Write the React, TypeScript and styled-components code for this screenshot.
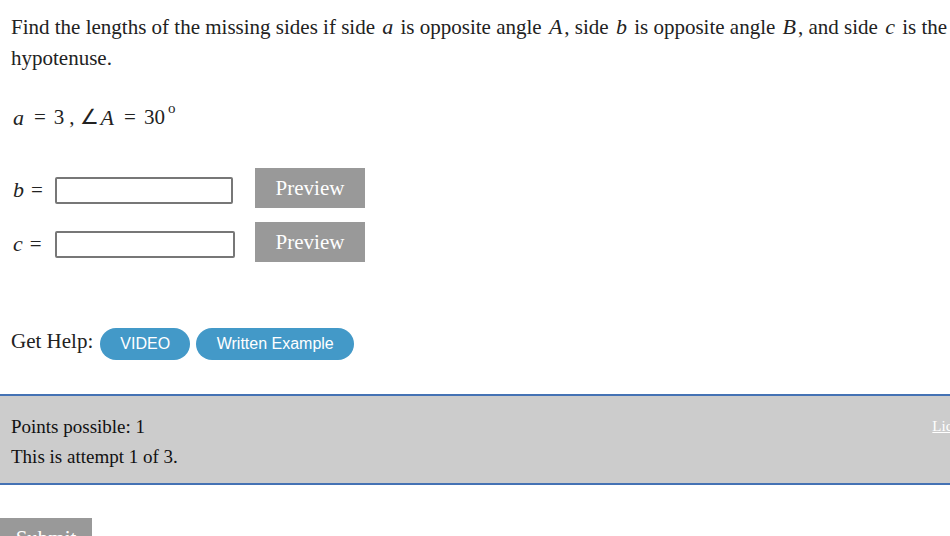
import React from "react";
import styled, { createGlobalStyle } from "styled-components";

const Global = createGlobalStyle`
  html, body { margin: 0; padding: 0; overflow: hidden; background: #fff; }
  body { font-family: "Liberation Serif", "Times New Roman", serif; color: #222; }
`;

const Page = styled.div`
  width: 1000px;
`;

const Question = styled.div`
  padding: 0 11px;
  font-size: 21px;
  line-height: 31px;
`;

const Para = styled.p`
  margin: 11px 0 0;
  width: 950px;
`;

const V = styled.i`
  font-family: "Liberation Serif", serif;
  font-style: italic;
  font-size: 22px;
  padding: 0 2px;
`;

const MathLine = styled.div`
  margin-top: 28px;
  font-size: 21px;
  height: 31px;
  display: flex;
  align-items: center;
`;

const Op = styled.span<{ $sp?: number }>`
  margin: 0 ${(p) => p.$sp ?? 8}px;
`;

const Deg = styled.span`
  font-size: 15px;
  position: relative;
  top: -9px;
  margin-left: 3px;
`;

const Rows = styled.div`
  margin-top: 35px;
  display: flex;
  flex-direction: column;
  gap: 14px;
`;

const Row = styled.div`
  display: flex;
  align-items: center;
  height: 40px;
`;

const Label = styled.span`
  width: 44px;
  font-size: 21px;
  margin-top: 4px;
`;

const Eq = styled.span`
  margin-left: 5px;
`;

const Input = styled.input<{ $w: number }>`
  box-sizing: border-box;
  width: ${(p) => p.$w}px;
  height: 27px;
  border: 2px solid #777;
  border-radius: 2px;
  margin: 4px 0 0;
  padding: 2px 4px;
  background: #fff;
`;

const Preview = styled.button<{ $ml: number }>`
  margin-left: ${(p) => p.$ml}px;
  width: 110px;
  height: 40px;
  background: #999;
  border: none;
  color: #fff;
  font-family: "Liberation Serif", serif;
  font-size: 21px;
  padding: 0;
`;

const Help = styled.div`
  margin-top: 66px;
  display: flex;
  align-items: center;
  font-size: 21px;
  height: 32px;
`;

const HelpText = styled.span`
  margin-right: 7px;
  position: relative;
  top: -3px;
`;

const Pill = styled.button<{ $w: number }>`
  width: ${(p) => p.$w}px;
  height: 32px;
  border-radius: 16px;
  border: none;
  background: #4399c8;
  color: #fff;
  font-family: "Liberation Sans", Arial, sans-serif;
  font-size: 16px;
  margin-right: 6px;
  padding: 0;
`;

const InfoBox = styled.div`
  margin-top: 34px;
  border-top: 2px solid #4472b4;
  border-bottom: 2px solid #4472b4;
  background: #ccc;
  height: 87px;
  box-sizing: content-box;
  display: flex;
  justify-content: space-between;
  padding: 0 11px;
  color: #111;
`;

const InfoText = styled.div`
  font-size: 19px;
  line-height: 30px;
  padding-top: 16px;
`;

const License = styled.a`
  color: #fff;
  font-size: 15px;
  margin-top: 22px;
  margin-right: 10px;
  text-decoration: underline;
  height: 20px;
`;

const Submit = styled.button`
  margin-top: 33px;
  width: 92px;
  height: 40px;
  background: #999;
  color: #fff;
  border: none;
  font-family: "Liberation Serif", serif;
  font-size: 21px;
  padding: 0;
  display: block;
`;

export default function App() {
  return (
    <Page>
      <Global />
      <Question>
        <Para>
          Find the lengths of the missing sides if side <V>a</V> is opposite angle <V>A</V>, side{" "}
          <V>b</V> is opposite angle <V>B</V>, and side <V>c</V> is the hypotenuse.
        </Para>
        <MathLine>
          <V>a</V>
          <Op>=</Op>3<Op $sp={5}>,</Op>∠<V>A</V>
          <Op>=</Op>30<Deg>o</Deg>
        </MathLine>
        <Rows>
          <Row>
            <Label>
              <V>b</V>
              <Eq>=</Eq>
            </Label>
            <Input $w={178} />
            <Preview $ml={22}>Preview</Preview>
          </Row>
          <Row>
            <Label>
              <V>c</V>
              <Eq>=</Eq>
            </Label>
            <Input $w={180} />
            <Preview $ml={20}>Preview</Preview>
          </Row>
        </Rows>
        <Help>
          <HelpText>Get Help:</HelpText>
          <Pill $w={90}>VIDEO</Pill>
          <Pill $w={158}>Written Example</Pill>
        </Help>
      </Question>
      <InfoBox>
        <InfoText>
          Points possible: 1
          <br />
          This is attempt 1 of 3.
        </InfoText>
        <License href="#">License</License>
      </InfoBox>
      <Submit>Submit</Submit>
    </Page>
  );
}
